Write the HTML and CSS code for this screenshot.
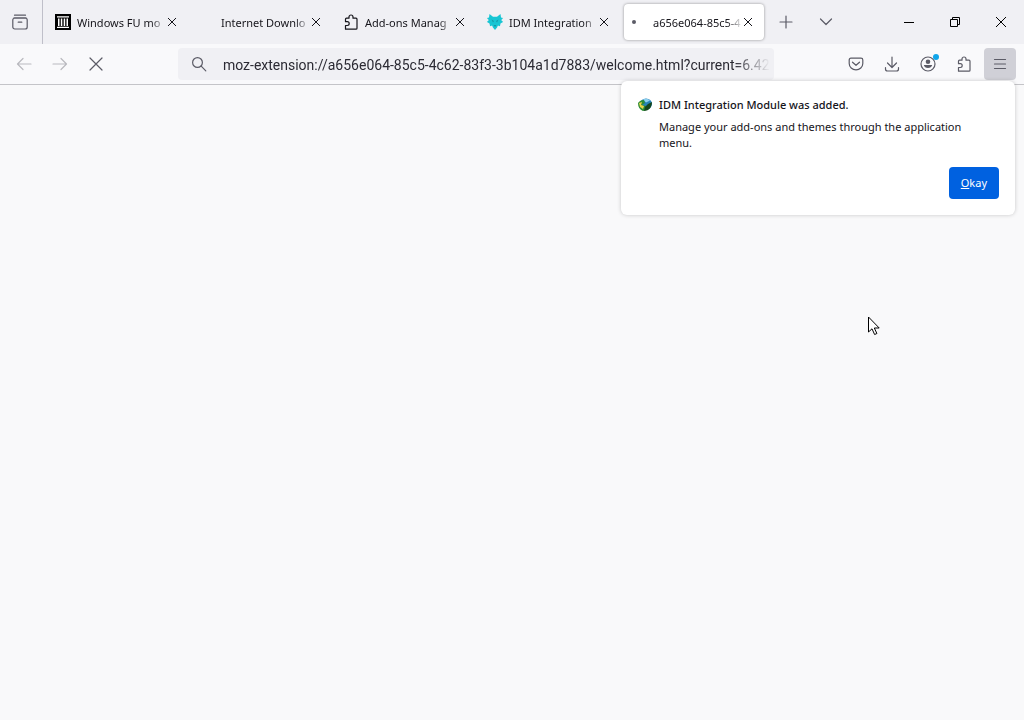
FILE: index.html
```html
<!DOCTYPE html>
<html lang="en">
<head>
    <meta charset="utf-8">
    <title>a656e064-85c5-4c62-83f3-3b104a1d7883</title>
    <link rel="stylesheet" href="styles.css">
</head>
<body>
    <header class="chrome">
        <div class="tabbar">
            <button class="icon-btn view-btn" aria-label="Firefox View">
                <svg class="icon" viewBox="0 0 16 16"><path d="M2.500 1.200h11M1.800 4h12.400"/><rect x=".8" y="4" width="14.400" height="11" rx="2"/><path d="M6.200 8.200h3.600"/></svg>
            </button>
            <div class="tabs">
                <div class="tab">
                    <svg class="favicon" viewBox="0 0 16 16"><path fill="#000" d="M0 0h16v16H0z"/><path fill="#fff" d="M2 12.800h12V14H2zM2 2.200h12v1.300H2zM3 4.500h1.500v7.500H3zM5.800 4.500h1.500v7.500H5.800zM8.700 4.500h1.500v7.500H8.700zM11.500 4.500H13v7.500h-1.500z"/></svg>
                    <span class="title">Windows FU mo</span>
                    <button class="close" aria-label="Close tab"><svg viewBox="0 0 10 10"><path d="M1 1l8 8M9 1L1 9"/></svg></button>
                </div>
                <div class="tab">
                    <span class="favicon"></span>
                    <span class="title">Internet Downlo</span>
                    <button class="close" aria-label="Close tab"><svg viewBox="0 0 10 10"><path d="M1 1l8 8M9 1L1 9"/></svg></button>
                </div>
                <div class="tab">
                    <svg class="favicon icon dark" viewBox="0 0 16 16"><path d="M2.500 15.200V11.500h1.800a1.900 1.900 0 0 0 0-3.800H2.500V5.200q0-1 1-1H6V3a2 2 0 0 1 4 0v1.200h3q1 0 1 1v9q0 1-1 1z"/></svg>
                    <span class="title">Add-ons Manag</span>
                    <button class="close" aria-label="Close tab"><svg viewBox="0 0 10 10"><path d="M1 1l8 8M9 1L1 9"/></svg></button>
                </div>
                <div class="tab">
                    <svg class="favicon" viewBox="0 0 16 16"><path fill="#18c5d3" d="M2.500 0L6 2.800h4L13.500 0l.5 3.500 2 .5-1.500 2 1.500 2-2.500 1.500-.5 2.500-2.500 1L8 16l-2.500-3-2.500-1-.5-2.500L0 8l1.500-2L0 4l2-.5z"/><path fill="#f0f0f4" d="M0 5.500l2 .5-2 1zM16 5.500L14 6l2 1zM3 12.500l2-1 1 2zM13 12.500l-2-1-1 2z"/><path fill="#1796a6" d="M4.500 5.500L7 7 6 8.500zM11.500 5.500L9 7l1 1.500zM6.500 11h3L8 13z"/></svg>
                    <span class="title">IDM Integration</span>
                    <button class="close" aria-label="Close tab"><svg viewBox="0 0 10 10"><path d="M1 1l8 8M9 1L1 9"/></svg></button>
                </div>
                <div class="tab selected">
                    <span class="favicon busy"></span>
                    <span class="title">a656e064-85c5-4</span>
                    <button class="close" aria-label="Close tab"><svg viewBox="0 0 10 10"><path d="M1 1l8 8M9 1L1 9"/></svg></button>
                </div>
                <button class="icon-btn new-tab" aria-label="New tab">
                    <svg class="icon" viewBox="0 0 16 16"><path d="M8 2v12M2 8h12"/></svg>
                </button>
                <button class="icon-btn" aria-label="List all tabs">
                    <svg class="icon" viewBox="0 0 16 16"><path d="M2.500 5L8 10.500 13.500 5"/></svg>
                </button>
            </div>
            <div class="window-controls">
                <button aria-label="Minimize"><svg viewBox="0 0 10 10"><path d="M0 5.500h10"/></svg></button>
                <button aria-label="Restore"><svg viewBox="0 0 10 10"><path d="M.5 2.500h7v7h-7zM2.500 2.500v-2h7v7h-2"/></svg></button>
                <button aria-label="Close"><svg viewBox="0 0 10 10"><path d="M0 0l10 10M10 0L0 10"/></svg></button>
            </div>
        </div>

        <div class="toolbar">
            <button class="icon-btn" aria-label="Back" disabled>
                <svg class="icon" viewBox="0 0 16 16"><path d="M15 8H1.500M7 2.500L1.500 8 7 13.500"/></svg>
            </button>
            <button class="icon-btn" aria-label="Forward" disabled>
                <svg class="icon" viewBox="0 0 16 16"><path d="M1 8h13.500M9 2.500L14.500 8 9 13.500"/></svg>
            </button>
            <button class="icon-btn" aria-label="Stop">
                <svg class="icon" viewBox="0 0 16 16"><path d="M2 2l12 12M14 2L2 14"/></svg>
            </button>
            <div class="spring"></div>
            <div class="urlbar">
                <svg class="icon" viewBox="0 0 16 16"><circle cx="6.500" cy="6.500" r="4.900"/><path d="M10.200 10.200l4.600 4.600"/></svg>
                <input class="url" type="text" aria-label="Address" value="moz-extension://a656e064-85c5-4c62-83f3-3b104a1d7883/welcome.html?current=6.42">
            </div>
            <div class="spring"></div>
            <button class="icon-btn" aria-label="Save to Pocket">
                <svg class="icon" viewBox="0 0 16 16"><path d="M3 2.200h10q1.800 0 1.800 1.800v3.500a6.800 6.300 0 0 1-13.600 0V4q0-1.800 1.800-1.800zM4.500 6.200L8 9.300l3.500-3.100"/></svg>
            </button>
            <button class="icon-btn" aria-label="Downloads">
                <svg class="icon" viewBox="0 0 16 16"><path d="M8 1v10.500M3.500 7L8 11.500 12.500 7M1.500 11.500V13q0 2 2 2h9q2 0 2-2v-1.500"/></svg>
            </button>
            <button class="icon-btn account" aria-label="Account">
                <svg class="icon" viewBox="0 0 16 16"><circle cx="8" cy="8" r="7"/><circle class="solid" cx="8" cy="5.800" r="2.300"/><path class="solid" d="M3.800 9h8.400a4.300 3.800 0 0 1-8.400 0z"/></svg>
                <span class="badge"></span>
            </button>
            <button class="icon-btn" aria-label="Extensions">
                <svg class="icon" viewBox="0 0 16 16"><path d="M2.500 15.200V11.500h1.800a1.900 1.900 0 0 0 0-3.800H2.500V5.200q0-1 1-1H6V3a2 2 0 0 1 4 0v1.200h3q1 0 1 1v9q0 1-1 1z"/></svg>
            </button>
            <button class="icon-btn open" aria-label="Open application menu">
                <svg class="icon" viewBox="0 0 16 16"><path d="M2.500 3.500h11M2.500 8h11M2.500 12.500h11"/></svg>
            </button>
        </div>
    </header>

    <main class="content"></main>

    <div class="popup" role="alertdialog" aria-labelledby="popup-title">
        <div class="notice">
            <svg class="logo" viewBox="0 0 16 16"><ellipse cx="9" cy="7" rx="6" ry="5.500" fill="#2582b8"/><path fill="#8ed0ef" d="M6 2.500q4-2 7 1l-4 2z"/><path fill="#2c8c36" d="M1 6q2-3 6-3l1 3-3 2 4 1 2 4-5 1q-5-2-5-8z"/><path fill="#e8d44a" d="M2 6l3-1-1 3 3 1-1 3-3-2z"/><path fill="#16451c" d="M8 10l3-3 4-2q0 5-4 8l-4 1z"/></svg>
            <div>
                <h1 id="popup-title">IDM Integration Module was added.</h1>
                <p>Manage your add-ons and themes through the application menu.</p>
            </div>
        </div>
        <button class="okay"><u>O</u>kay</button>
    </div>

    <svg class="pointer" viewBox="0 0 12 20"><path d="M.5 1v15l3.500-3.200 2.600 5.700 2.300-1-2.600-5.500h4.900z"/></svg>
</body>
</html>
```

FILE: styles.css
```css
* {
    box-sizing: border-box;
}
body {
    margin: 0;
    min-height: 100vh;
    display: flex;
    flex-direction: column;
    background: #f9f9fa;
    color: #15141a;
    font: 11px/16px "Noto Sans", "Open Sans", sans-serif;
    overflow: hidden;
}
button {
    padding: 0;
    border: 0;
    background: none;
    color: inherit;
    font: inherit;
}
svg {
    display: block;
    fill: none;
    stroke: none;
}
.icon {
    width: 16px;
    height: 16px;
    flex: none;
    stroke: #5b5b66;
    stroke-width: 1.2;
    stroke-linecap: round;
    stroke-linejoin: round;
}
.icon.dark {
    stroke: #15141a;
}
.icon .solid {
    fill: #5b5b66;
    stroke: none;
}
.icon-btn {
    display: flex;
    align-items: center;
    justify-content: center;
    width: 32px;
    height: 32px;
    flex: none;
    border-radius: 4px;
}
.icon-btn:disabled {
    opacity: 0.4;
}
.icon-btn.open {
    background: #d0d0d7;
}

/* tab strip */
.tabbar {
    display: flex;
    height: 44px;
    background: #f0f0f4;
}
.view-btn {
    width: 43px;
    height: 44px;
    padding-right: 2px;
    border-right: 1px solid #bfbfc9;
    border-radius: 0;
}
.tabs {
    display: flex;
    align-items: center;
    flex: 1;
    gap: 4px;
    min-width: 0;
    padding-left: 5px;
}
.tab {
    display: flex;
    align-items: center;
    flex: 0 1 140px;
    min-width: 0;
    height: 36px;
    padding: 0 11px 0 7px;
    border-radius: 4px;
}
.tab.selected {
    background: #fff;
    box-shadow: 0 0 3px rgba(0, 0, 0, 0.4);
}
.new-tab {
    margin: 0 4px 0 2px;
}
.favicon {
    width: 16px;
    height: 16px;
    flex: none;
    margin-right: 6px;
}
.busy {
    display: flex;
    align-items: center;
    padding-left: 1px;
}
.busy::before {
    content: "";
    width: 4px;
    height: 4px;
    border-radius: 2px;
    background: #5b5b66;
}
.title {
    flex: 1;
    min-width: 0;
    padding-top: 1px;
    white-space: nowrap;
    -webkit-mask-image: linear-gradient(to left, transparent, #000 16px);
    mask-image: linear-gradient(to left, transparent, #000 16px);
}
.close svg {
    width: 10px;
    height: 10px;
    stroke: #15141a;
}
.window-controls {
    display: flex;
}
.window-controls button {
    display: flex;
    align-items: center;
    justify-content: center;
    width: 46px;
}
.window-controls svg {
    width: 10px;
    height: 10px;
    overflow: visible;
    stroke: #000;
}

/* navigation */
.toolbar {
    display: flex;
    align-items: center;
    gap: 4px;
    height: 41px;
    padding: 0 8px;
    background: #f9f9fb;
    border-bottom: 1px solid #c4c4c8;
}
.spring {
    flex: 1;
}
.urlbar {
    display: flex;
    align-items: center;
    flex: 10;
    gap: 16px;
    height: 32px;
    padding: 0 4px 0 13px;
    border-radius: 4px;
    background: #f0f0f4;
}
.url {
    flex: 1;
    min-width: 0;
    padding: 2px 0 0;
    border: 0;
    outline: 0;
    background: none;
    color: #2b2a33;
    font: 14px/20px Roboto, "Noto Sans", sans-serif;
    -webkit-mask-image: linear-gradient(to left, transparent, #000 36px);
    mask-image: linear-gradient(to left, transparent, #000 36px);
}
.account {
    position: relative;
}
.badge {
    position: absolute;
    top: 6px;
    right: 5px;
    width: 6px;
    height: 6px;
    border-radius: 3px;
    background: #0fa5ea;
}

.content {
    flex: 1;
}

/* add-on notification */
.popup {
    position: absolute;
    top: 81px;
    right: 9px;
    display: flex;
    flex-direction: column;
    gap: 16px;
    width: 394px;
    padding: 16px;
    border-radius: 6px;
    background: #fff;
    box-shadow: 0 0 4px rgba(0, 0, 0, 0.2);
}
.notice {
    display: flex;
    gap: 6px;
    padding-right: 16px;
}
.logo {
    width: 16px;
    height: 16px;
    flex: none;
}
.popup h1 {
    margin: 0 0 6px;
    font-size: 11px;
    font-weight: 500;
    line-height: 16px;
}
.popup p {
    margin: 0;
}
.okay {
    align-self: flex-end;
    height: 32px;
    padding: 0 12px;
    border-radius: 4px;
    background: #0061e0;
    color: #fff;
}

.pointer {
    position: absolute;
    top: 316px;
    left: 868px;
    width: 12px;
    height: 20px;
    fill: #fff;
    stroke: #000;
}
```
